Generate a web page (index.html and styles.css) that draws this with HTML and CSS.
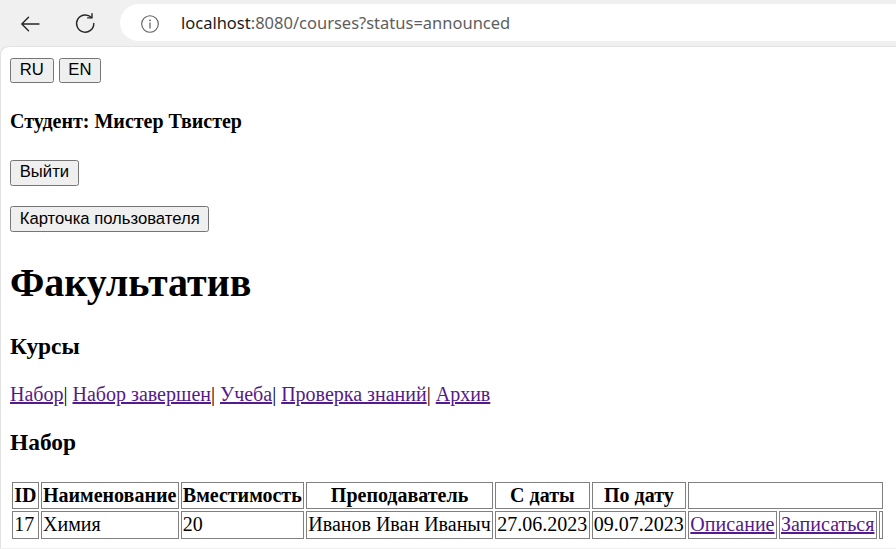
FILE: index.html
```html
<!DOCTYPE html>
<html lang="ru">
<head>
<meta charset="utf-8">
<title>Факультатив</title>
<link rel="stylesheet" href="styles.css">
</head>
<body>
<header class="chrome">
  <span class="nav-btn back">
    <svg width="20" height="16" viewBox="0 0 20 16"><path d="M19 8H1.8M8.5 1.3L1.8 8L8.5 14.7" fill="none" stroke="#262626" stroke-width="1.4" stroke-linecap="round" stroke-linejoin="round"/></svg>
  </span>
  <span class="nav-btn reload">
    <svg width="22" height="22" viewBox="0 0 22 22"><path d="M17.4 5.6A8.6 8.6 0 1 0 19.8 11.5" fill="none" stroke="#262626" stroke-width="1.4" stroke-linecap="round"/><path d="M18 1.6V5.9H13.7" fill="none" stroke="#262626" stroke-width="1.4" stroke-linecap="round" stroke-linejoin="round"/></svg>
  </span>
  <div class="omnibox">
    <svg class="info" width="20" height="20" viewBox="0 0 20 20"><circle cx="10" cy="10" r="8.3" fill="none" stroke="#5c5c5c" stroke-width="1.1"/><circle cx="10" cy="6.3" r="0.9" fill="#5c5c5c"/><path d="M10 8.6V14.4" stroke="#5c5c5c" stroke-width="1.2"/></svg>
    <span class="url"><span class="host">localhost</span>:8080/courses?status=announced</span>
  </div>
</header>
<main class="viewport">
  <div class="page">
    <div class="lang"><button type="button">RU</button> <button type="button">EN</button></div>
    <h4>Студент: Мистер Твистер</h4>
    <div class="action"><button type="button">Выйти</button></div>
    <div class="action"><button type="button">Карточка пользователя</button></div>
    <h1>Факультатив</h1>
    <h3>Курсы</h3>
    <p class="tabs"><a href="#">Набор</a>| <a href="#">Набор завершен</a>| <a href="#">Учеба</a>| <a href="#">Проверка знаний</a>| <a href="#">Архив</a></p>
    <h3>Набор</h3>
    <table class="courses">
      <tr>
        <th>ID</th>
        <th>Наименование</th>
        <th>Вместимость</th>
        <th>Преподаватель</th>
        <th>С даты</th>
        <th>По дату</th>
        <th colspan="3"></th>
      </tr>
      <tr>
        <td>17</td>
        <td>Химия</td>
        <td>20</td>
        <td>Иванов Иван Иваныч</td>
        <td>27.06.2023</td>
        <td>09.07.2023</td>
        <td><a href="#">Описание</a></td>
        <td><a href="#">Записаться</a></td>
        <td></td>
      </tr>
    </table>
  </div>
</main>
</body>
</html>
```

FILE: styles.css
```css
html, body {
  margin: 0;
  padding: 0;
  background: #f0f0f0;
}
body {
  width: 896px;
  height: 549px;
  overflow: hidden;
}
.chrome {
  height: 46px;
  display: flex;
  align-items: flex-start;
  background: #f0f0f0;
  box-sizing: border-box;
}
.nav-btn {
  display: flex;
  align-items: center;
  justify-content: center;
}
.back {
  margin-left: 20px;
  margin-top: 16px;
  width: 20px;
  height: 16px;
}
.reload {
  margin-left: 34px;
  margin-top: 12px;
  width: 22px;
  height: 22px;
}
.omnibox {
  margin-left: 24px;
  margin-top: 4px;
  height: 37px;
  flex: 1;
  background: #ffffff;
  border-radius: 18.5px 0 0 18.5px;
  display: flex;
  align-items: center;
  padding-left: 20px;
}
.info {
  margin-top: 2px;
}
.url {
  margin-left: 21px;
  font-family: "Noto Sans", "Open Sans", sans-serif;
  font-size: 16.5px;
  color: #5e5e5e;
}
.host {
  color: #1b1b1b;
}
.viewport {
  display: block;
  background: #ffffff;
  border-top-left-radius: 8px;
  box-shadow: inset 1px 1px 0 #e2e2e2;
  padding-top: 1px;
  height: 502px;
  box-sizing: border-box;
}
.page {
  zoom: 1.25;
  padding: 8px;
  font-family: "Liberation Serif", "Times New Roman", serif;
  font-size: 16px;
  color: #000000;
}
button {
  font-family: "Liberation Sans", Arial, sans-serif;
  font-size: 13.333px;
  line-height: 15px;
  color: #000000;
  background: #efefef;
  border: 1px solid #767676;
  border-radius: 2px;
  padding: 2px 7px;
  margin: 0;
}
.action {
  margin-bottom: 16px;
}
h1 {
  font-size: 32px;
  margin: 21.44px 0;
}
h3 {
  font-size: 18.72px;
  margin: 18.72px 0;
}
h4 {
  font-size: 16px;
  margin: 21.28px 0;
}
p {
  margin: 16px 0;
}
a {
  color: #551a8b;
}
.courses {
  border-collapse: separate;
  border-spacing: 2px;
}
.courses th,
.courses td {
  border: 1px solid #808080;
  padding: 1px;
}
.courses th {
  font-weight: bold;
  text-align: center;
}
.courses td {
  text-align: left;
}
```
